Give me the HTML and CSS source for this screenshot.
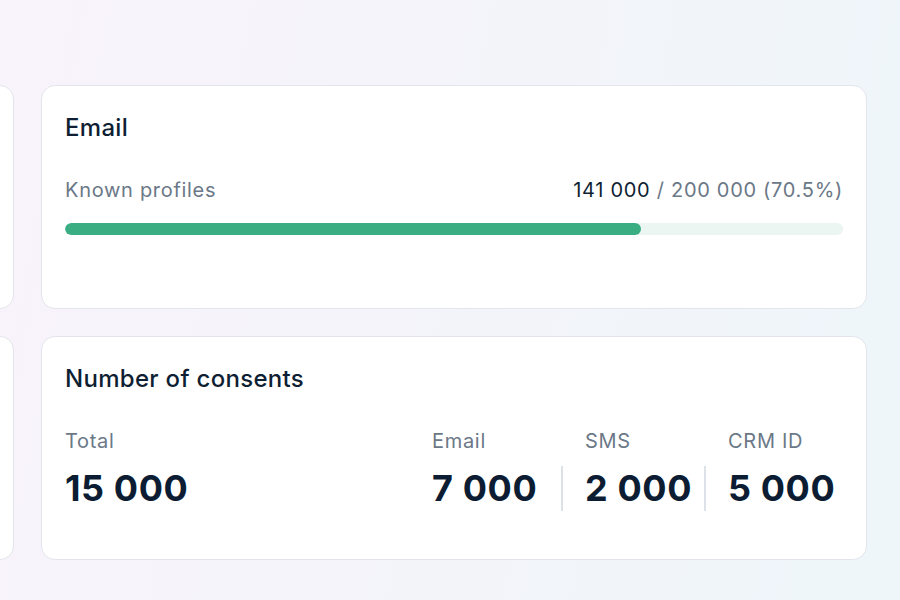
FILE: index.html
```html
<!DOCTYPE html>
<html lang="en">
<head>
    <meta charset="UTF-8">
    <meta name="viewport" content="width=device-width, initial-scale=1">
    <title>Profiles overview</title>
    <link rel="stylesheet" href="styles.css">
</head>
<body>
<div class="board">
    <div class="card card-side"></div>
    <div class="card">
        <h2 class="card-title">Email</h2>
        <div class="known-row">
            <span class="muted">Known profiles</span>
            <span class="ratio"><span class="strong">141 000</span> / 200 000 (70.5%)</span>
        </div>
        <div class="bar">
            <div class="bar-fill" style="width: 74%"></div>
        </div>
    </div>

    <div class="card card-side"></div>
    <div class="card">
        <h2 class="card-title">Number of consents</h2>
        <div class="stats">
            <div class="stat">
                <div class="stat-label">Total</div>
                <div class="stat-value">15 000</div>
            </div>
            <div class="stat">
                <div class="stat-label">Email</div>
                <div class="stat-value">7 000</div>
            </div>
            <div class="stat split">
                <div class="stat-label">SMS</div>
                <div class="stat-value">2 000</div>
            </div>
            <div class="stat split">
                <div class="stat-label">CRM ID</div>
                <div class="stat-value">5 000</div>
            </div>
        </div>
    </div>
</div>
</body>
</html>
```

FILE: styles.css
```css
html, body {
    margin: 0;
    height: 100%;
}

body {
    font-family: Inter, "Noto Sans", sans-serif;
    color: #0f1f33;
    background: linear-gradient(100deg, #f9f3fb 0%, #f4f4fa 45%, #eef6fa 100%);
    overflow: hidden;
}

.board {
    display: grid;
    grid-template-columns: 300px 826px;
    grid-auto-rows: 224px;
    gap: 27px;
    padding-top: 85px;
    margin-left: -286px;
}

.card {
    box-sizing: border-box;
    background: #fff;
    border: 1px solid #e2e5eb;
    border-radius: 14px;
    padding: 27px 23px 0 23px;
}

.card-title {
    margin: 0;
    font-size: 24px;
    line-height: 30px;
    font-weight: 500;
    letter-spacing: 0.3px;
}

.known-row {
    display: flex;
    justify-content: space-between;
    margin-top: 35px;
    font-size: 20px;
    line-height: 24px;
    letter-spacing: 0.7px;
}

.muted {
    color: #6b7887;
}

.ratio {
    color: #6b7887;
}

.ratio .strong {
    color: #0f1f33;
}

.bar {
    margin-top: 21px;
    height: 12px;
    border-radius: 6px;
    background: #ebf5f1;
    overflow: hidden;
}

.bar-fill {
    height: 100%;
    border-radius: 6px;
    background: #3bad83;
}

.stats {
    display: grid;
    grid-template-columns: 1fr 129px 143px 139px;
    margin-top: 35px;
}

.stat-label {
    font-size: 20px;
    line-height: 24px;
    letter-spacing: 0.7px;
    color: #6b7887;
}

.stat-value {
    margin-top: 13px;
    font-size: 36px;
    line-height: 45px;
    font-weight: 700;
    letter-spacing: 0.6px;
    color: #0c1d33;
}

.stat.split .stat-label {
    padding-left: 24px;
}

.stat.split .stat-value {
    padding-left: 22px;
    border-left: 2px solid #dde2e9;
}
```
